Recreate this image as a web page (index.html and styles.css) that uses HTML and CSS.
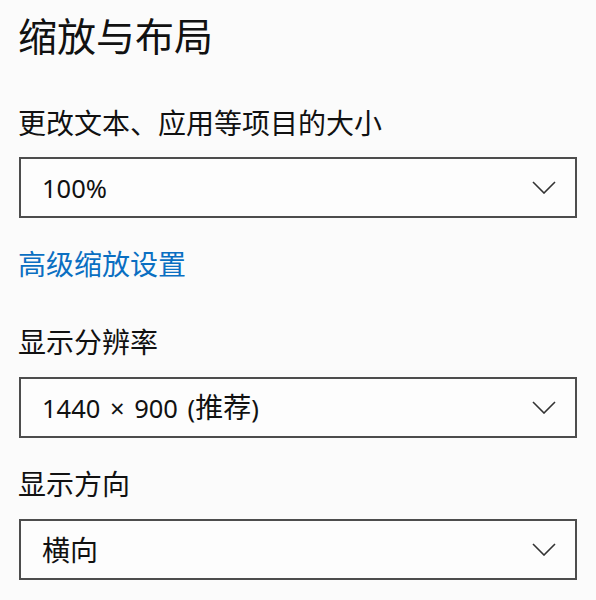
FILE: index.html
```
<!DOCTYPE html>
<html>
<head>
    <meta charset="UTF-8">
    <title>缩放与布局</title>
    <link rel="stylesheet" href="styles.css">
</head>
<body>
  <div class="page">
    <h1 class="title">缩放与布局</h1>

    <div class="label first">更改文本、应用等项目的大小</div>
    <div class="combo">
        <span class="value"><span class="num">100%</span></span>
        <svg class="chevron" width="24" height="13" viewBox="0 0 24 13">
            <polyline points="1,1 12,12 23,1" />
        </svg>
    </div>

    <a class="link" href="#">高级缩放设置</a>

    <div class="label second">显示分辨率</div>
    <div class="combo">
        <span class="value"><span class="num">1440 × 900 (</span>推荐<span class="num">)</span></span>
        <svg class="chevron" width="24" height="13" viewBox="0 0 24 13">
            <polyline points="1,1 12,12 23,1" />
        </svg>
    </div>

    <div class="label third">显示方向</div>
    <div class="combo">
        <span class="value">横向</span>
        <svg class="chevron" width="24" height="13" viewBox="0 0 24 13">
            <polyline points="1,1 12,12 23,1" />
        </svg>
    </div>
  </div>
</body>
</html>
```

FILE: styles.css
```
html, body{
    margin: 0;
    height: 100%;
}
body{
    background-color: #fbfbfb;
    color: #111;
    font-family: "Noto Sans", "Noto Sans CJK SC", sans-serif;
}
.page{
    display: flex;
    flex-direction: column;
    align-items: flex-start;
    padding: 16px 0 0 18px;
}
.title{
    margin: 0;
    font-size: 39px;
    font-weight: 400;
    line-height: 40px;
}
.label{
    font-size: 28px;
    line-height: 30px;
}
.label.first{
    margin-top: 52px;
}
.label.second{
    margin-top: 48px;
}
.label.third{
    margin-top: 31px;
}
.combo{
    box-sizing: border-box;
    width: 558px;
    height: 61px;
    margin: 20px 0 0 1px;
    border: 2px solid #4d4d4d;
    background: #fdfdfd;
    display: flex;
    align-items: center;
    justify-content: space-between;
    padding: 0 19px 0 21px;
}
.label.first + .combo{
    margin-top: 19px;
}
.value{
    font-size: 28px;
    line-height: 30px;
}
.value .num{
    font-size: 25.5px;
    word-spacing: 3px;
}
.chevron polyline{
    fill: none;
    stroke: #333;
    stroke-width: 1.6;
}
.link{
    margin-top: 31px;
    font-size: 28px;
    line-height: 30px;
    color: #0a6fc2;
    text-decoration: none;
}
```
